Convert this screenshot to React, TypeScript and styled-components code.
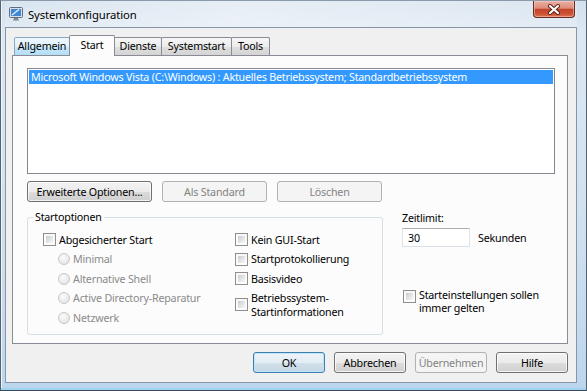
import React from "react";
import styled, { createGlobalStyle, css } from "styled-components";

const GlobalStyle = createGlobalStyle`
  html, body {
    margin: 0;
    padding: 0;
    overflow: hidden;
  }
  body {
    font-family: "Noto Sans", "Open Sans", sans-serif;
    font-size: 10.7px;
    letter-spacing: -0.2px;
    color: #000;
  }
  * {
    box-sizing: border-box;
  }
`;

const TABS = [
  { id: "allgemein", label: "Allgemein", width: 56, hot: true },
  { id: "start", label: "Start", width: 46, selected: true },
  { id: "dienste", label: "Dienste", width: 48 },
  { id: "systemstart", label: "Systemstart", width: 71 },
  { id: "tools", label: "Tools", width: 39 },
];

const SAFE_MODES = ["Minimal", "Alternative Shell", "Active Directory-Reparatur", "Netzwerk"];

const BOOT_FLAGS = [
  ["Kein GUI-Start"],
  ["Startprotokollierung"],
  ["Basisvideo"],
  ["Betriebssystem-", "Startinformationen"],
];

const App: React.FC = () => {
  return (
    <>
      <GlobalStyle />
      <Window>
        <TitleBar>
          <AppIcon />
          <Title>Systemkonfiguration</Title>
          <CloseButton aria-label="Schließen">
            <svg width="14" height="11" viewBox="0 0 14 11">
              <path d="M3 2 L11 9 M11 2 L3 9" stroke="#5a1d14" strokeWidth="4" strokeLinecap="round" />
              <path d="M3 2 L11 9 M11 2 L3 9" stroke="#fff" strokeWidth="2.2" strokeLinecap="round" />
            </svg>
          </CloseButton>
        </TitleBar>

        <Client>
          <TabStrip>
            {TABS.map((t) => (
              <Tab key={t.id} $w={t.width} $selected={!!t.selected} $hot={!!t.hot}>
                {t.label}
              </Tab>
            ))}
          </TabStrip>

          <Panel>
            <ListBox>
              <ListRow $selected>
                Microsoft Windows Vista (C:\Windows) : Aktuelles Betriebssystem; Standardbetriebssystem
              </ListRow>
            </ListBox>

            <ButtonRow>
              <Button $w={125}>Erweiterte Optionen...</Button>
              <Button $w={105} disabled>
                Als Standard
              </Button>
              <Button $w={105} disabled>
                Löschen
              </Button>
            </ButtonRow>

            <Lower>
              <GroupBox>
                <Legend>Startoptionen</Legend>
                <GroupBody>
                  <Column>
                    <OptionRow>
                      <CheckBox />
                      <OptionText>Abgesicherter Start</OptionText>
                    </OptionRow>
                    {SAFE_MODES.map((m) => (
                      <OptionRow key={m} $indent>
                        <Radio />
                        <OptionText $disabled>{m}</OptionText>
                      </OptionRow>
                    ))}
                  </Column>
                  <Column>
                    {BOOT_FLAGS.map((lines) => (
                      <OptionRow key={lines[0]} $tall={lines.length > 1}>
                        <CheckBox />
                        <OptionText>
                          {lines.map((l) => (
                            <span key={l}>{l}</span>
                          ))}
                        </OptionText>
                      </OptionRow>
                    ))}
                  </Column>
                </GroupBody>
              </GroupBox>

              <SideColumn>
                <FieldLabel>Zeitlimit:</FieldLabel>
                <TimeoutRow>
                  <TextInput defaultValue="30" />
                  <span>Sekunden</span>
                </TimeoutRow>
                <PersistRow>
                  <CheckBox />
                  <PersistText>
                    Starteinstellungen sollen
                    <br />
                    immer gelten
                  </PersistText>
                </PersistRow>
              </SideColumn>
            </Lower>
          </Panel>

          <DialogButtons>
            <Button $w={72} $default>
              OK
            </Button>
            <Button $w={72}>Abbrechen</Button>
            <Button $w={72} disabled>
              Übernehmen
            </Button>
            <Button $w={72}>Hilfe</Button>
          </DialogButtons>
        </Client>
      </Window>
    </>
  );
};

export default App;

const AppIcon: React.FC = () => (
  <IconWrap>
    <svg width="16" height="16" viewBox="0 0 16 16">
      <rect x="1.5" y="1.5" width="13" height="10" rx="1" fill="#d9dee4" stroke="#5f6f80" />
      <rect x="3" y="3" width="10" height="7" fill="#3f86d4" />
      <path d="M4 9 L11 3.5" stroke="#e8f2fc" strokeWidth="1.4" />
      <path d="M6 12 h4 l1 2.5 h-6 z" fill="#7d8894" />
    </svg>
  </IconWrap>
);

const Window = styled.div`
  width: 587px;
  height: 391px;
  display: flex;
  flex-direction: column;
  padding: 0 9px 7px 4px;
  border: 1px solid #56626e;
  border-top-color: #8a9aab;
  border-bottom-color: #3d4853;
  background: linear-gradient(180deg, #d3e0ed 0%, #dde8f3 8%, #cfe0f0 60%, #bcd6ee 100%);
  box-shadow: inset 0 -2px 0 #9fd4f2, inset 1px 0 0 #eef5fb;
`;

const TitleBar = styled.div`
  position: relative;
  height: 26px;
  display: flex;
  align-items: center;
  padding-left: 3px;
  background: linear-gradient(90deg, rgba(255, 255, 255, 0.15), rgba(255, 255, 255, 0.45) 40%, rgba(255, 255, 255, 0.2));
`;

const IconWrap = styled.span`
  display: flex;
  width: 16px;
  height: 16px;
`;

const Title = styled.span`
  margin-left: 4px;
  flex: 1;
  font-size: 11.3px;
  letter-spacing: -0.1px;
  color: #000;
  text-shadow: 0 0 6px rgba(255, 255, 255, 0.9);
`;

const CloseButton = styled.button`
  align-self: flex-start;
  width: 42px;
  height: 17px;
  margin-right: 2px;
  padding: 0;
  display: flex;
  align-items: center;
  justify-content: center;
  border: 1px solid #6a2a22;
  border-top: none;
  border-radius: 0 0 4px 4px;
  background: linear-gradient(180deg, #eab0a2 0%, #dc8c7b 45%, #c4452c 52%, #cc5134 80%, #dc7654 100%);
  box-shadow: inset 0 0 0 1px rgba(255, 220, 210, 0.45);
`;

const Client = styled.div`
  flex: 1;
  display: flex;
  flex-direction: column;
  padding: 7px 8px 0 6px;
  border: 1px solid #8796a6;
  background: #f0f0f0;
`;

const TabStrip = styled.div`
  position: relative;
  z-index: 1;
  height: 21px;
  display: flex;
  align-items: flex-start;
  padding-left: 2px;
`;

const Tab = styled.div<{ $w: number; $selected: boolean; $hot: boolean }>`
  position: relative;
  width: ${(p) => p.$w}px;
  height: 18px;
  margin-top: 2px;
  margin-left: -1px;
  display: flex;
  align-items: center;
  justify-content: center;
  padding-bottom: 1px;
  border: 1px solid #898c95;
  border-bottom: none;
  border-radius: 2px 2px 0 0;
  white-space: nowrap;
  background: linear-gradient(180deg, #f6f6f6 0%, #ececec 50%, #dfdfdf 51%, #d4d4d4 100%);

  &:first-child {
    margin-left: 0;
  }

  ${(p) =>
    p.$hot &&
    css`
      background: linear-gradient(180deg, #eef8fe 0%, #dff1fc 50%, #c8e8fb 51%, #b3ddf6 100%);
      border-color: #8aa6bd;
    `}

  ${(p) =>
    p.$selected &&
    css`
      z-index: 2;
      height: 21px;
      margin-top: 0;
      padding-bottom: 3px;
      background: #fcfcfc;
    `}
`;

const Panel = styled.div`
  height: 289px;
  margin-top: -1px;
  padding: 12px 12px 0 14px;
  border: 1px solid #898c95;
  background: #fcfcfc;
  display: flex;
  flex-direction: column;
`;

const ListBox = styled.div`
  height: 106px;
  padding: 1px;
  border: 1px solid #828790;
  background: #fff;
`;

const ListRow = styled.div<{ $selected?: boolean }>`
  height: 14px;
  line-height: 14px;
  padding-left: 2px;
  white-space: nowrap;
  overflow: hidden;
  ${(p) =>
    p.$selected &&
    css`
      background: #3399ff;
      color: #fff;
    `}
`;

const ButtonRow = styled.div`
  display: flex;
  gap: 10px;
  margin-top: 7px;
`;

const Button = styled.button<{ $w: number; $default?: boolean }>`
  width: ${(p) => p.$w}px;
  height: 21px;
  padding: 0;
  font-family: inherit;
  font-size: inherit;
  letter-spacing: inherit;
  color: #000;
  border: 1px solid #707070;
  border-radius: 3px;
  background: linear-gradient(180deg, #f3f3f3 0%, #ebebeb 50%, #dddddd 51%, #cfcfcf 100%);
  box-shadow: inset 0 0 0 1px rgba(255, 255, 255, 0.75);

  ${(p) =>
    p.$default &&
    css`
      border-color: #3c7fb1;
      background: linear-gradient(180deg, #eef4f8 0%, #e3edf4 50%, #d2e1eb 51%, #c5d7e4 100%);
      box-shadow: inset 0 0 0 1px #bfe3f7;
    `}

  &:disabled {
    color: #838383;
    border-color: #adb2b5;
    background: #f4f4f4;
    box-shadow: none;
  }
`;

const Lower = styled.div`
  display: flex;
  align-items: flex-start;
  gap: 19px;
  margin-top: 7px;
`;

const GroupBox = styled.fieldset`
  width: 356px;
  margin: 0;
  padding: 0 0 6px 5px;
  min-width: 0;
  border: 1px solid #d5dfe5;
  border-radius: 3px;
`;

const Legend = styled.legend`
  padding: 0 2px;
  line-height: 16px;
`;

const GroupBody = styled.div`
  display: grid;
  grid-template-columns: 192px 1fr;
  padding: 5px 0 0 10px;
`;

const Column = styled.div`
  display: flex;
  flex-direction: column;
`;

const OptionRow = styled.div<{ $indent?: boolean; $tall?: boolean }>`
  display: flex;
  align-items: center;
  gap: 3px;
  height: 19.5px;
  padding-left: ${(p) => (p.$indent ? 15 : 0)}px;

  ${(p) =>
    p.$tall &&
    css`
      height: auto;
      padding-top: 2px;
    `}
`;

const OptionText = styled.span<{ $disabled?: boolean }>`
  display: flex;
  flex-direction: column;
  line-height: 14px;
  white-space: nowrap;
  color: ${(p) => (p.$disabled ? "#8a8a8a" : "#000")};
`;

const CheckBox = styled.span`
  flex: none;
  width: 13px;
  height: 13px;
  padding: 2px;
  border: 1px solid #8f8f8f;
  background: linear-gradient(135deg, #c9cbcf 0%, #e6e7e8 60%, #f6f6f6 100%) content-box,
    linear-gradient(#f7f7f7, #fdfdfd) padding-box;
`;

const Radio = styled.span`
  flex: none;
  width: 12px;
  height: 12px;
  border-radius: 50%;
  border: 1px solid #c8c8c8;
  background: radial-gradient(circle at 40% 35%, #fbfbfb 0%, #ececec 55%, #dedede 100%);
`;

const SideColumn = styled.div`
  display: flex;
  flex-direction: column;
`;

const FieldLabel = styled.div`
  line-height: 16px;
  padding-top: 1px;
`;

const TimeoutRow = styled.div`
  display: flex;
  align-items: center;
  gap: 8px;
  margin-top: 2px;
`;

const TextInput = styled.input`
  width: 68px;
  height: 19px;
  padding: 0 0 0 5px;
  font-family: inherit;
  font-size: inherit;
  letter-spacing: inherit;
  border: 1px solid #dbdfe6;
  border-top-color: #abadb3;
  border-left-color: #e2e3ea;
  border-right-color: #e2e3ea;
  background: #fff;
  outline: none;
`;

const PersistRow = styled.div`
  display: flex;
  align-items: flex-start;
  gap: 3px;
  margin-top: 42px;
  padding-left: 1px;

  & > span:first-child {
    margin-top: 1px;
  }
`;

const PersistText = styled.div`
  line-height: 13px;
`;

const DialogButtons = styled.div`
  display: flex;
  justify-content: flex-end;
  gap: 9px;
  margin-top: 8px;
`;
